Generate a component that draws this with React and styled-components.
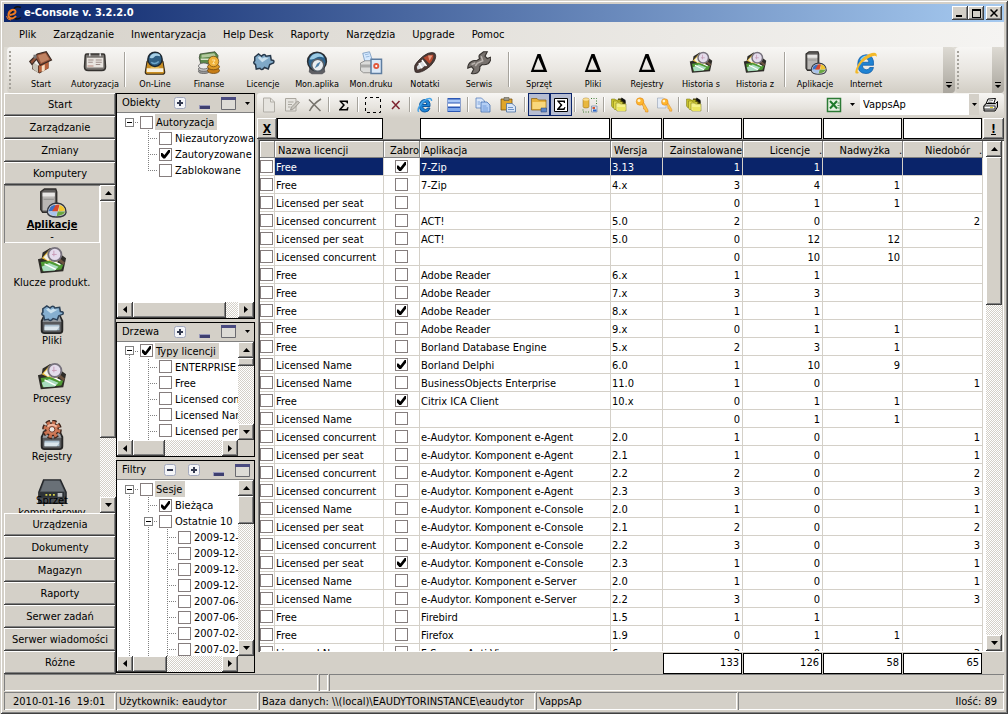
import React from 'react'
import styled, { createGlobalStyle, css } from 'styled-components'

const GlobalStyle = createGlobalStyle`
  * {
    box-sizing: border-box;
  }
  body {
    margin: 0;
    background: #d4d0c8;
  }
  body, button, input, select {
    font-family: 'DejaVu Sans Condensed', 'DejaVu Sans', sans-serif;
    font-size: 11px;
    color: #000;
  }
  button {
    margin: 0;
    padding: 0;
    border: 0;
    background: none;
  }
  ul {
    list-style: none;
    margin: 0;
    padding: 0;
  }
  svg {
    display: block;
    flex: none;
  }
`

const raised = css`
  background: #d4d0c8;
  box-shadow: inset -1px -1px #404040, inset 1px 1px #fff, inset -2px -2px #808080;
`

const flat = css`
  background: #d4d0c8;
  box-shadow: inset -1px -1px #808080, inset 1px 1px #fff;
`

/* ---------- data ---------- */

const menu = ['Plik', 'Zarządzanie', 'Inwentaryzacja', 'Help Desk', 'Raporty', 'Narzędzia', 'Upgrade', 'Pomoc']

const topTools = [
  ['Start', 'house'],
  ['Autoryzacja', 'card'],
  null,
  ['On-Line', 'user'],
  ['Finanse', 'money'],
  ['Licencje', 'puzzle'],
  ['Mon.aplika', 'compass'],
  ['Mon.druku', 'printDoc'],
  ['Notatki', 'knife'],
  ['Serwis', 'wrench'],
  null,
  ['Sprzęt', 'delta'],
  ['Pliki', 'delta'],
  ['Rejestry', 'delta'],
  ['Historia s', 'photos'],
  ['Historia z', 'photos'],
  null,
  ['Aplikacje', 'apps'],
  ['Internet', 'ieRing'],
]

const gridTools = [
  ['Nowy', 'page'],
  ['Edytuj', 'edit'],
  ['Usuń', 'cross'],
  null,
  ['Suma', 'sigma'],
  null,
  ['Zaznacz', 'marquee'],
  ['Odznacz', 'redCross'],
  null,
  ['Przeglądarka', 'ie'],
  null,
  ['Wiersze', 'rows'],
  null,
  ['Kopiuj', 'copy'],
  ['Wklej', 'paste', 'wide'],
  null,
  ['Grupy', 'folder', 'pressed'],
  ['Podsumowanie', 'sigmaBox', 'pressed'],
  null,
  ['Baza', 'dbSelect'],
  null,
  ['Foldery', 'folders'],
  ['Klucz', 'key'],
  ['Klucz dokumentu', 'keyPage'],
  null,
  ['Archiwum', 'folders'],
  null,
]

const topSections = ['Start', 'Zarządzanie', 'Zmiany', 'Komputery']
const bottomSections = ['Urządzenia', 'Dokumenty', 'Magazyn', 'Raporty', 'Serwer zadań', 'Serwer wiadomości', 'Różne']

const shortcuts = [
  ['Klucze produkt.', 'photos'],
  ['Pliki', 'drivePuzzle'],
  ['Procesy', 'photos'],
  ['Rejestry', 'driveGear'],
]

const objects = [
  { text: 'Autoryzacja', guides: ['root'], on: false },
  { text: 'Niezautoryzowane', guides: ['none', 'tee'], on: false },
  { text: 'Zautoryzowane', guides: ['none', 'tee'], on: true },
  { text: 'Zablokowane', guides: ['none', 'end'], on: false },
]

const trees = [
  { text: 'Typy licencji', guides: ['open'], on: true },
  ...['ENTERPRISE', 'Free', 'Licensed concurrent', 'Licensed Name', 'Licensed per seat', 'Licensed server'].map(text => ({
    text,
    guides: ['line', 'tee'],
    on: false,
  })),
]

const filters = [
  { text: 'Sesje', guides: ['open'], on: false },
  { text: 'Bieżąca', guides: ['line', 'tee'], on: true },
  { text: 'Ostatnie 10', guides: ['line', 'open'], on: false },
  ...['2009-12-14', '2009-12-11', '2009-12-10', '2009-12-09', '2007-06-19', '2007-06-12', '2007-02-20', '2007-02-13'].map(text => ({
    text,
    guides: ['line', 'line', 'tee'],
    on: false,
  })),
]

const rows = [
  ['Free', 1, '7-Zip', '3.13', 1, 1, '', ''],
  ['Free', 0, '7-Zip', '4.x', 3, 4, 1, ''],
  ['Licensed per seat', 0, '', '', 0, 1, 1, ''],
  ['Licensed concurrent', 0, 'ACT!', '5.0', 2, 0, '', 2],
  ['Licensed per seat', 0, 'ACT!', '5.0', 0, 12, 12, ''],
  ['Licensed concurrent', 0, '', '', 0, 10, 10, ''],
  ['Free', 0, 'Adobe Reader', '6.x', 1, 1, '', ''],
  ['Free', 0, 'Adobe Reader', '7.x', 3, 3, '', ''],
  ['Free', 1, 'Adobe Reader', '8.x', 1, 1, '', ''],
  ['Free', 0, 'Adobe Reader', '9.x', 0, 1, 1, ''],
  ['Free', 0, 'Borland Database Engine', '5.x', 2, 3, 1, ''],
  ['Licensed Name', 1, 'Borland Delphi', '6.0', 1, 10, 9, ''],
  ['Licensed Name', 0, 'BusinessObjects Enterprise', '11.0', 1, 0, '', 1],
  ['Free', 1, 'Citrix ICA Client', '10.x', 0, 1, 1, ''],
  ['Licensed Name', 0, '', '', 0, 1, 1, ''],
  ['Licensed concurrent', 0, 'e-Audytor. Komponent e-Agent', '2.0', 1, 0, '', 1],
  ['Licensed per seat', 0, 'e-Audytor. Komponent e-Agent', '2.1', 1, 0, '', 1],
  ['Licensed concurrent', 0, 'e-Audytor. Komponent e-Agent', '2.2', 2, 0, '', 2],
  ['Licensed concurrent', 0, 'e-Audytor. Komponent e-Agent', '2.3', 3, 0, '', 3],
  ['Licensed Name', 0, 'e-Audytor. Komponent e-Console', '2.0', 1, 0, '', 1],
  ['Licensed per seat', 0, 'e-Audytor. Komponent e-Console', '2.1', 2, 0, '', 2],
  ['Licensed concurrent', 0, 'e-Audytor. Komponent e-Console', '2.2', 3, 0, '', 3],
  ['Licensed per seat', 1, 'e-Audytor. Komponent e-Console', '2.3', 1, 0, '', 1],
  ['Licensed Name', 0, 'e-Audytor. Komponent e-Server', '2.0', 1, 0, '', 1],
  ['Licensed Name', 0, 'e-Audytor. Komponent e-Server', '2.2', 3, 0, '', 3],
  ['Free', 0, 'Firebird', '1.5', 1, 1, '', ''],
  ['Free', 0, 'Firefox', '1.9', 0, 1, 1, ''],
  ['Licensed Name', 0, 'F-Secure Anti-Virus', '6.x', 3, 0, '', 3],
]

/* ---------- icons ---------- */

const photosArt = (
  <>
    <path d="m1 14 4-1 1-6 5-3 3-2 13 8 4 3-3 14-24 2z" fill="#2e2c28" />
    <path d="m5 13 8-9 13 6-6 10z" fill="#e3b93b" />
    <path d="m7 12 6-6 4 2-5 8z" fill="#f3f2ea" />
    <path d="m4 17 9-1 15 4-2 5-20 2z" fill="#4f9a35" />
    <path d="m5 22 8-4 10 4-4 4-12 1z" fill="#a9dcc0" />
    <path d="m8 19 12 6M13 14l12 6" stroke="#fff" strokeWidth="1.500" />
    <path d="m23 14 6 5" stroke="#6d5440" strokeWidth="3" />
    <circle cx="19" cy="9" r="7" fill="#e4dcec" stroke="#77727d" strokeWidth="2" />
    <path d="M18 5v6M16 9h5" stroke="#c79bb4" />
  </>
)

const driveArt = (
  <>
    <path d="M5 18 8 12h16l3 6v10q0 3-3 3H8q-3 0-3-3z" fill="#58595b" stroke="#262626" strokeWidth="2" />
    <path d="m8 13-2 6h20l-2-6z" fill="#9aa0a5" />
    <path d="M8 22h16v6H8z" fill="#a9bfce" />
    <path d="M8 24h16l-3 4H8z" fill="#dbe6ec" />
  </>
)

const puzzlePath = 'M5 8 10 4l4 3q4-5 6 0l6-1 1 6q5 0 3 4l-5 2-2 6-5-2q-4 5-6 1l-5 1-1-6q-4-2-1-5z'
const ePath = 'M26 19H11q1 6 6 6 3 0 4-3h5q-2 8-10 8Q5 30 5 18T16 5q11 0 10 14zM11 15h9q-1-5-4-5-4 0-5 5z'

const folderStack = (
  <>
    <path d="M14 3h8l7 6v14H14z" fill="#4d490c" />
    <path d="M1 4h7l2 2h9v15H3L1 18z" fill="#c6c02c" stroke="#77720f" />
    <path d="M5 8h7l2 2h9v15H7l-2-3z" fill="#dfd94a" stroke="#77720f" />
    <path d="M10 12h7l2 2h11v14H12l-2-3z" fill="#f6f28a" stroke="#77720f" />
    <path d="M12 20h17l-1 8H14z" fill="#ece65e" />
    <path d="m21 1 8 5v7l-9-7z" fill="#111" />
  </>
)

const keyArt = (
  <>
    <path d="m14 12 4-3 10 17v4h-5l-1-5-3-1v-4z" fill="#ffc448" stroke="#d77a12" />
    <circle cx="12" cy="9" r="7.500" fill="#ffb62e" stroke="#d77a12" />
    <circle cx="10" cy="7" r="3" fill="#fff3cf" />
  </>
)

const art = {
  house: (
    <>
      <path d="m4 17 7 3 15-6v9L14 30 4 24z" fill="#4a3024" />
      <path d="m4 14 8 5v10l-7-5z" fill="#c9c5b8" />
      <path d="m13 19 13-6v10l-13 6z" fill="#b8623b" />
      <path d="M17 20l4-2v8l-4 2z" fill="#f4dfc4" />
      <path d="M1 14 11 4l12-3 7 11-15 7-5-8-6 7z" fill="#94543a" stroke="#3a2922" strokeWidth="1.500" />
      <path d="m12 6 10-3 5 8-11 5z" fill="#c08363" />
      <path d="M6 5h4v5H6z" fill="#777" />
    </>
  ),
  card: (
    <>
      <path d="M3 6q0-2 2-2h22q2 0 2 2l1 15q0 5-5 5H7q-5 0-5-5z" fill="#77736f" stroke="#34322f" strokeWidth="2" />
      <path d="M5 9h22v13H5z" fill="#e8e4df" />
      <path d="M7 12h7M7 15h6M17 12h8M17 15h8M17 18h6" stroke="#a08f8a" strokeWidth="1.500" />
      <path d="M9 3v4M23 3v4" stroke="#ddd" strokeWidth="2" />
      <path d="M6 19h8v2H6z" fill="#c9a79c" />
    </>
  ),
  user: (
    <>
      <path d="M3 28 5 16q0-4 4-4h14q4 0 4 4l2 12q0 3-3 3H6q-3 0-3-3z" fill="#c98e22" stroke="#33291a" strokeWidth="1.500" />
      <path d="M5 23h22v5H5z" fill="#f7efdc" />
      <path d="m9 23 14 0-4-3h-7z" fill="#e8bd55" />
      <circle cx="16" cy="11" r="9.500" fill="#2f5f84" stroke="#1c2730" strokeWidth="2" />
      <path d="M9 9q1-6 8-6 6 0 6 4-6-2-8 1t-6 1z" fill="#a7d0e6" />
      <path d="M11 15q5 4 10-1" stroke="#6ea6c9" strokeWidth="2" fill="none" />
    </>
  ),
  money: (
    <>
      <path d="M4 4 24 1l4 5-1 11H5L3 9z" fill="#5c8a4b" stroke="#33412c" />
      <path d="m6 5 17-2 2 4L6 9z" fill="#b2c99d" />
      <path d="M5 11h20" stroke="#d8e2cb" strokeWidth="2" />
      <ellipse cx="9" cy="27" rx="7" ry="3" fill="#999" stroke="#555" />
      <ellipse cx="9" cy="24" rx="7" ry="3" fill="#c7c7c7" stroke="#555" />
      <ellipse cx="9" cy="20" rx="7" ry="4" fill="#ececec" stroke="#555" />
      <ellipse cx="22" cy="26" rx="8" ry="4" fill="#c77d16" stroke="#6a430e" />
      <ellipse cx="22" cy="21" rx="8" ry="4" fill="#dd9a26" stroke="#6a430e" />
      <circle cx="22" cy="14" r="7" fill="#f0b23a" stroke="#7a4f10" />
      <path d="M20 12h4l-3 5h3" stroke="#fff0c0" fill="none" />
    </>
  ),
  puzzle: (
    <>
      <path d={puzzlePath} fill="#7fa9c8" stroke="#27384a" strokeWidth="2" />
      <path d="m9 9 3-2 3 3q4-3 5-1l4 0-9 6z" fill="#c9e0ee" />
    </>
  ),
  compass: (
    <>
      <path d="M6 20h20l1 8-4 3H9l-4-3z" fill="#5f5f63" />
      <circle cx="16" cy="14" r="12.500" fill="#2d638c" stroke="#2a2e33" strokeWidth="2" />
      <path d="M6 11Q9 3 17 3q7 1 8 6-6-3-10 0t-9 2z" fill="#9ccbe4" />
      <circle cx="17" cy="19" r="8" fill="#e9edf0" stroke="#59616a" strokeWidth="2" />
      <path d="m13 23 3-6 5-3-3 6z" fill="#4b7ea7" />
    </>
  ),
  printDoc: (
    <>
      <path d="M5 3 14 1l4 12-10 2z" fill="#d5e9ff" stroke="#6a8fb8" />
      <path d="m8 5 5-1M9 8l5-1" stroke="#86a9d0" />
      <path d="M2 16 8 13h14l5 4v9l-7 3H6l-4-3z" fill="#dcdcda" stroke="#7b7b79" />
      <path d="M2 18h15v4H2z" fill="#a9a9a7" />
      <path d="M16 11h14v19H16z" fill="#dbe9f8" stroke="#5e7da0" strokeWidth="2" />
      <circle cx="23" cy="20" r="4" fill="#e2573b" />
      <circle cx="23" cy="20" r="1.500" fill="#fff" />
    </>
  ),
  knife: (
    <>
      <path d="M2 24q-1-5 4-10Q13 6 20 3q6-2 9 0 3 4-1 11-4 7-13 12-8 4-12 2z" fill="#4b3a36" stroke="#2b2220" />
      <path d="M14 9q7-5 13-4 1 6-5 12z" fill="#b6492f" />
      <path d="m20 6 6 0-4 7z" fill="#e59a80" />
      <path d="M5 21q4-6 8-8l4 6q-5 5-11 6z" fill="#d9dde0" />
      <path d="m12 12 6 8M8 16l4 7" stroke="#fff" strokeWidth="2" />
    </>
  ),
  wrench: (
    <>
      <path
        d="m17 5 5-4 5 0-3 6 3 3 5-2q0 6-4 9-4 2-8 1l-3 3q1 5-3 8-4 2-8 1l3-6-3-3-5 2q0-6 5-9 3-2 7-1l4-3q-2-3 0-5z"
        fill="#77716d"
        stroke="#36322f"
        strokeWidth="1.500"
      />
      <path d="m19 7 2 6-7 3-3 4M6 18l5-2" stroke="#b9b3ae" strokeWidth="2" fill="none" />
    </>
  ),
  delta: <path d="M5 28 14 4h4l9 24zm4-3h13L15 9z" fill="#000" fillRule="evenodd" />,
  photos: photosArt,
  apps: (
    <>
      <path d="m4 4 4-3h12l1 3v22H6l-2-3z" fill="#5f5d5b" stroke="#2f2d2b" strokeWidth="1.500" />
      <path d="M6 5h13v19H6z" fill="#b9b7b4" />
      <path d="M6 5h13v4H6z" fill="#e7e6e4" />
      <path d="M7 12h11" stroke="#8c8a88" />
      <path d="M11 26q0-9 10-10 10 1 10 10-1 5-10 5t-10-5z" fill="#d7d6d3" stroke="#313640" strokeWidth="1.500" />
      <path d="M13 23q1-5 7-5v6l-8 1z" fill="#3c6fc4" />
      <path d="M20 18q3-1 4 0l-2 7h-6z" fill="#d9482b" />
      <path d="M24 18q5 1 6 6l-7 1z" fill="#f2c62e" />
      <path d="M22 25h8q-1 4-9 5z" fill="#6aa843" />
      <path d="M12 25h10l-2 5q-7-1-8-5z" fill="#a9c4ec" />
    </>
  ),
  ieRing: (
    <>
      <path d={ePath} fill="#1f83d3" fillRule="evenodd" stroke="#0c5aa6" />
      <path d="M9 12q3-5 8-5" stroke="#7fd0ff" strokeWidth="2" fill="none" />
      <path d="M7 29Q-1 33 3 23 8 10 20 4q12-5 10 4-1-4-10 1Q8 15 5 25q-1 4 2 4z" fill="#f3b92a" />
    </>
  ),
  ie: (
    <>
      <path d={ePath} fill="#1f86d6" fillRule="evenodd" stroke="#0b559e" strokeWidth="2" />
      <path d="M4 28Q1 30 3 22 9 10 20 4q10-3 9 4" fill="none" stroke="#49a4e6" strokeWidth="3" />
    </>
  ),
  drivePuzzle: (
    <>
      {driveArt}
      <g transform="translate(2 -1) scale(.85 .75)">
        <path d={puzzlePath} fill="#86afd0" stroke="#2d4258" strokeWidth="2" />
        <path d="m9 9 3-2 3 3q4-3 5-1l4 0-9 6z" fill="#c9e0ee" />
      </g>
    </>
  ),
  driveGear: (
    <>
      {driveArt}
      <circle cx="16" cy="10" r="8" fill="none" stroke="#3b231b" strokeWidth="5" strokeDasharray="4.200 2.080" />
      <circle cx="16" cy="10" r="7.500" fill="#3b231b" />
      <circle cx="16" cy="10" r="7" fill="none" stroke="#c9714f" strokeWidth="4" strokeDasharray="3.200 2.300" />
      <circle cx="16" cy="10" r="6" fill="#cf7a58" />
      <path d="M11 7q5-4 10 0" stroke="#f2b79f" strokeWidth="2" fill="none" />
      <circle cx="16" cy="10" r="3" fill="#e9e7e3" stroke="#6f3524" />
    </>
  ),
  server: (
    <>
      <path d="M7 2h18l6 13v12H2V15z" fill="#4a4f54" stroke="#23262a" strokeWidth="1.500" />
      <path d="M8 3h16l5 11H4z" fill="#697077" />
      <path d="M3 15h26v6H3z" fill="#2d3236" />
      <path d="M9 17h2v2H9zM13 17h2v2h-2zM17 17h2v2h-2z" fill="#d8d24a" />
      <path d="M22 16h5v4h-5z" fill="#b8bcc0" />
    </>
  ),
  page: <path d="M5 2h14l8 8v20H5zM19 2v8h8" fill="#e6e4df" stroke="#b1aea7" strokeWidth="2" />,
  edit: (
    <>
      <path d="M3 3h21v25H3z" fill="#e6e4df" stroke="#aaa79f" strokeWidth="2" />
      <path d="M8 10h11M8 15h8M8 20h5" stroke="#aaa79f" strokeWidth="2" />
      <path d="m27 8 4 3-12 13-6 2 2-6z" fill="#c9c6bf" stroke="#8d8a83" strokeWidth="1.500" />
    </>
  ),
  cross: <path d="m4 5 23 23M28 4Q13 13 5 28" fill="none" stroke="#77746d" strokeWidth="3" />,
  sigma: <path d="M7 7h17v6h-2q0-3-4-3h-6l6 6-7 8h8q4 0 4-4h2l-1 7H6v-2l8-9-7-7z" fill="#000" />,
  marquee: <path d="M1 1h30v30H1z" fill="none" stroke="#000" strokeWidth="2" strokeDasharray="6 6" strokeDashoffset="3" />,
  redCross: <path d="m8 8 15 16M23 8 8 24" stroke="#7d2430" strokeWidth="3" />,
  rows: (
    <>
      <path d="M3 2h26v28H3z" fill="#2b57b4" />
      <path d="M4 5h24v6H4z" fill="#a9c7f5" />
      <path d="M4 13h24v6H4z" fill="#fff" />
      <path d="M4 22h24v6H4z" fill="#7ea8ec" />
    </>
  ),
  copy: (
    <>
      <path d="M2 2h11l6 6v14H2z" fill="#dbe8fa" stroke="#5079b8" strokeWidth="1.500" />
      <path d="M12 10h12l6 6v14H12z" fill="#b4cff5" stroke="#3c68ad" strokeWidth="1.500" />
      <path d="M5 10h5M5 14h5M15 18h8M15 22h11M15 26h11" stroke="#5f8bd0" strokeWidth="1.500" />
    </>
  ),
  paste: (
    <>
      <path d="M2 4h22v22H2z" fill="#e0a62b" stroke="#6d4c12" strokeWidth="1.500" />
      <path d="M8 1h10v6H8z" fill="#9b9688" stroke="#4f4a3c" />
      <path d="M13 13h11l7 6v11H13z" fill="#d9e6f8" stroke="#41699f" strokeWidth="1.500" />
      <path d="M16 21h10M16 25h12" stroke="#6d93c9" strokeWidth="2" />
    </>
  ),
  folder: (
    <>
      <path d="M1 3h11l3 3h15v20H1z" fill="#e8b23c" stroke="#8e6516" strokeWidth="1.500" />
      <path d="M3 10h26v14H3z" fill="#f9d77b" />
      <path d="M20 22h11v8H20z" fill="#5c84c4" stroke="#233f70" />
    </>
  ),
  sigmaBox: (
    <>
      <path d="M3 3h26v26H3z" fill="#fff" stroke="#000" strokeWidth="2" />
      <path d="M8 7h16v5h-2q0-3-4-2h-5l6 6-6 7h6q3 0 4-3h2l-2 6H8v-2l7-8-7-8z" fill="#000" />
    </>
  ),
  dbSelect: (
    <>
      <path d="M2 5q0-3 6-3t6 3v14q0 3-6 3t-6-3z" fill="#e8b73f" stroke="#90691c" />
      <ellipse cx="8" cy="5" rx="6" ry="2.500" fill="#f9df94" />
      <path d="M18 3h11v12M2 25v5h13" fill="none" stroke="#3f7d33" strokeWidth="2" strokeDasharray="2 3" />
      <path d="M19 18h11v12H19z" fill="#dfe6f0" stroke="#45628e" />
      <path d="M21 20h5v4h-5z" fill="#d4542e" />
      <path d="M22 25h7v4h-7z" fill="#2f67c4" />
    </>
  ),
  folders: folderStack,
  key: keyArt,
  keyPage: (
    <>
      <path d="M1 2h12l5 5v15H1z" fill="#e4ebf5" stroke="#8291a8" />
      <g transform="translate(5 2) scale(.88)">{keyArt}</g>
    </>
  ),
  excel: (
    <>
      <path d="M3 3h26v26H3z" fill="#e3f1e0" stroke="#2c7a35" strokeWidth="3" />
      <path d="m8 8 14 15M22 8 8 23" stroke="#1f7a2c" strokeWidth="4" />
      <path d="M23 12h4M23 17h4M23 22h4" stroke="#2c7a35" strokeWidth="1.500" />
    </>
  ),
  printer: (
    <>
      <path d="m10 4 15-1-4 11H6z" fill="#fff" stroke="#000" strokeWidth="2" />
      <path d="m11 8 9-1M10 11l9 0" stroke="#000" />
      <path d="M2 17 7 13h18l4-4v11l-5 8H2z" fill="#c9c9c9" stroke="#000" strokeWidth="2" />
      <path d="M2 18h22v6H2z" fill="#fff" stroke="#000" strokeWidth="1.500" />
      <path d="M14 21h6" stroke="#e3d31b" strokeWidth="2" />
    </>
  ),
  logo: (
    <>
      <path d="M30 5Q18 0 13 12t5 15q5 3 12-2" fill="none" stroke="#111" strokeWidth="3" />
      <path d="M8 20q12-2 11-7t-7-3Q5 13 5 20t7 7q5-1 8-5" fill="none" stroke="#ef7b22" strokeWidth="4" />
      <path d="M1 22q1 8 9 8" stroke="#ef7b22" strokeWidth="2" fill="none" />
    </>
  ),
}

const Icon = ({ name, size = 16 }) => (
  <svg width={size} height={size} viewBox="0 0 32 32" fill="none" aria-hidden="true">
    {art[name]}
  </svg>
)

const arrows = {
  up: 'M0 4h7L3.500 0z',
  down: 'M0 0h7L3.500 4z',
  left: 'M4 0v7L0 3.500z',
  right: 'M0 0v7l4-3.500z',
}

const Arrow = ({ dir }) => {
  const upright = dir === 'up' || dir === 'down'
  return (
    <svg width={upright ? 7 : 4} height={upright ? 4 : 7} aria-hidden="true">
      <path d={arrows[dir]} fill="#000" />
    </svg>
  )
}

/* ---------- window frame ---------- */

const Window = styled.div`
  display: flex;
  flex-direction: column;
  height: 100vh;
  padding: 4px;
  background: #d4d0c8;
  box-shadow: inset 1px 1px #d4d0c8, inset -1px -1px #404040, inset 2px 2px #fff, inset -2px -2px #808080;
`

const TitleBar = styled.header`
  display: flex;
  align-items: center;
  height: 18px;
  flex: none;
  padding: 0 2px;
  background: linear-gradient(90deg, #0a246a, #a6caf0);
`

const Title = styled.h1`
  flex: 1;
  margin: 0 0 0 2px;
  font-size: 11px;
  line-height: 18px;
  color: #fff;
`

const CaptionButton = styled.button`
  ${raised}
  display: flex;
  justify-content: center;
  align-items: center;
  width: 16px;
  height: 14px;
  margin-left: ${p => (p.$apart ? '2px' : '0')};
`

const MenuBar = styled.nav`
  display: flex;
  align-items: center;
  gap: 17px;
  height: 25px;
  flex: none;
  padding: 0 15px;
  background: linear-gradient(90deg, #d6d2ca, #f5f4f2);
`

const MenuItem = styled.button`
  line-height: 16px;
  white-space: nowrap;
`

/* ---------- top toolbar ---------- */

const ToolStrips = styled.div`
  display: flex;
  height: 46px;
  flex: none;
  padding-left: 3px;
  background: #dedbd4;
`

const Strip = styled.div`
  display: flex;
  flex: ${p => (p.$grow ? '1' : '0 0 49px')};
  min-width: 0;
  border-radius: 4px;
  background: linear-gradient(#f7f6f4, #e9e6e1 50%, #d2cec5);
`

const Grip = styled.span`
  width: 5px;
  margin: 4px 0 4px 2px;
  background: repeating-linear-gradient(#a5a29b 0 2px, transparent 2px 4px) 0 0 / 2px 100% no-repeat;
`

const TopButton = styled.button`
  display: flex;
  flex-direction: column;
  align-items: center;
  width: ${p => (p.$narrow ? '48px' : '54px')};
  flex: none;
  padding-top: 4px;
  font-size: 9px;
  line-height: 18px;
  white-space: nowrap;
`

const Divider = styled.span`
  width: 6px;
  flex: none;
  margin: ${p => (p.$tall ? '5px 0 6px' : '4px 0')};
  background: linear-gradient(90deg, #a6a39c 1px, #fff 1px) 2px 0 / 2px 100% no-repeat;
`

const Spacer = styled.span`
  flex: 1;
`

const Overflow = styled.button`
  display: flex;
  align-items: flex-end;
  justify-content: center;
  width: 12px;
  padding-bottom: 4px;
  border-radius: 0 4px 4px 0;
  background: linear-gradient(#dddad3, #aaa69e);
`

/* ---------- sidebar ---------- */

const Main = styled.main`
  display: grid;
  grid-template-columns: 112px 139px minmax(0, 1fr);
  flex: 1;
  min-height: 0;
`

const Sidebar = styled.nav`
  display: flex;
  flex-direction: column;
  min-height: 0;
`

const SectionButton = styled.button`
  ${raised}
  height: 23px;
  flex: none;
  white-space: nowrap;
`

const ShortcutArea = styled.div`
  display: flex;
  flex: 1;
  min-height: 0;
`

const ShortcutList = styled.div`
  flex: 1;
  overflow: hidden;
`

const Shortcut = styled.button`
  display: flex;
  flex-direction: column;
  align-items: center;
  width: 96px;
  height: 58px;
  padding-top: 3px;
  line-height: 14px;
`

const ActiveShortcut = styled(Shortcut)`
  line-height: 11px;
  box-shadow: inset 1px 1px #808080, inset -1px -1px #fff;

  strong {
    line-height: 13px;
    text-decoration: underline;
  }
`

const ClippedShortcut = styled(Shortcut)`
  line-height: 12px;

  span {
    margin-top: -13px;
  }
`

/* ---------- scroll bars ---------- */

const Bar = styled.div`
  display: flex;
  flex-direction: ${p => (p.$across ? 'row' : 'column')};
  flex: none;
  ${p => (p.$across ? 'height: 16px;' : 'width: 16px;')}
  background: repeating-conic-gradient(#fff 0 25%, #d4d0c8 0 50%) 0 0 / 2px 2px;
`

const BarButton = styled.button`
  ${raised}
  display: flex;
  align-items: center;
  justify-content: center;
  width: 16px;
  height: 16px;
  flex: none;
`

const Thumb = styled.span`
  ${raised}
  flex: ${p => p.$share} 1 0;
`

const Rest = styled.span`
  flex: ${p => p.$share} 1 0;
`

const ScrollBar = ({ across, share }) => (
  <Bar $across={across}>
    <BarButton aria-label={across ? 'W lewo' : 'W górę'}>
      <Arrow dir={across ? 'left' : 'up'} />
    </BarButton>
    <Thumb $share={share} />
    <Rest $share={100 - share} />
    <BarButton aria-label={across ? 'W prawo' : 'W dół'}>
      <Arrow dir={across ? 'right' : 'down'} />
    </BarButton>
  </Bar>
)

/* ---------- tree panels ---------- */

const Panels = styled.div`
  display: grid;
  grid-template-rows: 226fr 136fr 213fr;
  gap: 3px;
  min-height: 0;
  padding-bottom: 1px;
`

const PanelBox = styled.section`
  display: flex;
  flex-direction: column;
  min-width: 0;
  min-height: 0;
  border: 1px solid #000;
  overflow: hidden;
`

const PanelHead = styled.div`
  display: flex;
  height: 19px;
  flex: none;
  border-bottom: 1px solid #808080;
`

const PanelTitle = styled.h2`
  flex: 1;
  margin: 0;
  padding-left: 5px;
  font-size: 11px;
  font-weight: normal;
  line-height: 17px;
`

const PanelButton = styled.button`
  display: flex;
  align-items: center;
  justify-content: center;
  width: ${p => (p.$small ? '14px' : '24px')};
`

const PanelBody = styled.div`
  display: flex;
  flex: 1;
  min-height: 0;
  background: #fff;
`

const PanelFoot = styled.div`
  display: flex;
  flex: none;

  & > div {
    flex: 1;
  }
`

const Corner = styled.span`
  width: 16px;
  background: #d4d0c8;
`

const TreeList = styled.ul`
  flex: 1;
  min-width: 0;
  padding: 1px 0 0 3px;
  overflow: hidden;
`

const TreeRow = styled.li`
  display: flex;
  align-items: center;
  height: 16px;
  white-space: nowrap;
`

const vertical = 'repeating-linear-gradient(#808080 0 1px, transparent 1px 2px)'
const horizontal = 'repeating-linear-gradient(90deg, #808080 0 1px, transparent 1px 2px) 9px 8px / 10px 1px no-repeat'

const guideBackgrounds = {
  none: 'none',
  root: horizontal,
  line: `${vertical} 9px 0 / 1px 16px no-repeat`,
  tee: `${vertical} 9px 0 / 1px 16px no-repeat, ${horizontal}`,
  end: `${vertical} 9px 0 / 1px 8px no-repeat, ${horizontal}`,
  open: `${vertical} 9px 8px / 1px 8px no-repeat, ${horizontal}`,
}

const Guide = styled.span`
  display: flex;
  align-items: center;
  justify-content: center;
  width: 19px;
  height: 16px;
  flex: none;
  background: ${p => guideBackgrounds[p.$kind]};
`

const Expander = styled.button`
  width: 9px;
  height: 9px;
  border: 1px solid #808080;
  background: linear-gradient(#000, #000) center / 5px 1px no-repeat #fff;
`

const Check = styled.input.attrs({ type: 'checkbox' })`
  appearance: none;
  display: block;
  width: 13px;
  height: 13px;
  flex: none;
  margin: 0;
  border: 1px solid #857d7d;
  background: #fff;

  &:checked::after {
    content: '';
    display: block;
    width: 9px;
    height: 9px;
    margin: 1px;
    background: #000;
    clip-path: polygon(0 40%, 15% 40%, 38% 62%, 85% 0, 100% 0, 100% 30%, 45% 100%, 25% 100%, 0 72%);
  }
`

const TreeLabel = styled.label`
  display: flex;
  align-items: center;
  gap: 2px;
  padding-left: 1px;

  span {
    padding: 1px ${p => (p.$root ? '3px' : '1px')} 0 1px;
    line-height: 15px;
    background: ${p => (p.$root ? '#d4d0c8' : 'none')};
  }
`

const headIcons = {
  minus: (
    <svg width="12" height="12">
      <rect x="0.500" y="0.500" width="11" height="11" rx="2" fill="#f4f5f8" stroke="#a3a9bd" />
      <path d="M3 6h6" stroke="#333a50" strokeWidth="2" />
    </svg>
  ),
  plus: (
    <svg width="12" height="12">
      <rect x="0.500" y="0.500" width="11" height="11" rx="2" fill="#f4f5f8" stroke="#a3a9bd" />
      <path d="M3 6h6M6 3v6" stroke="#333a50" strokeWidth="2" />
    </svg>
  ),
  min: (
    <svg width="11" height="12">
      <path d="M0 8h11v4H0z" fill="#9a9abb" />
      <path d="M1 9h10v3H1z" fill="#3e3f70" />
    </svg>
  ),
  max: (
    <svg width="15" height="13">
      <path d="M0.500 0.500h14v12h-14z" fill="#dddbd6" stroke="#6a6a70" />
      <path d="M0 0h15v3H0z" fill="#4a4b80" />
    </svg>
  ),
  drop: (
    <svg width="5" height="3">
      <path d="M0 0h5L2.500 3z" fill="#000" />
    </svg>
  ),
}

const Panel = ({ title, buttons, nodes, vShare, hShare }) => (
  <PanelBox>
    <PanelHead>
      <PanelTitle>{title}</PanelTitle>
      {buttons.map(b => (
        <PanelButton key={b} $small={b === 'drop'} aria-label={`${title} ${b}`}>
          {headIcons[b]}
        </PanelButton>
      ))}
    </PanelHead>
    <PanelBody>
      <TreeList>
        {nodes.map((node, i) => (
          <TreeRow key={i}>
            {node.guides.map((kind, g) => (
              <Guide key={g} $kind={kind}>
                {(kind === 'open' || kind === 'root') && <Expander aria-label={`Zwiń ${node.text}`} />}
              </Guide>
            ))}
            <TreeLabel $root={i === 0}>
              <Check defaultChecked={node.on} />
              <span>{node.text}</span>
            </TreeLabel>
          </TreeRow>
        ))}
      </TreeList>
      {vShare && <ScrollBar share={vShare} />}
    </PanelBody>
    <PanelFoot>
      <ScrollBar across share={hShare} />
      {vShare && <Corner />}
    </PanelFoot>
  </PanelBox>
)

/* ---------- grid ---------- */

const Content = styled.section`
  display: flex;
  flex-direction: column;
  min-width: 0;
  min-height: 0;
  padding-left: 2px;
`

const GridToolbar = styled.div`
  display: flex;
  height: 25px;
  flex: none;
  padding: 0 2px 2px 0;
  border-radius: 3px;
  background: linear-gradient(#f7f6f4, #e6e3dd 60%, #d4d0c8);
`

const ToolButton = styled.button`
  display: flex;
  align-items: center;
  justify-content: center;
  width: ${p => (p.$look === 'wide' ? '28px' : p.$look === 'pressed' ? '22px' : '23px')};
  flex: none;
  ${p => p.$look === 'pressed' && 'border: 1px solid #0a246a; background: #b6bdd2;'}
`

const Combo = styled.div`
  position: relative;
  width: 119px;
  margin: 1px 0 1px 1px;
`

const ComboSelect = styled.select`
  appearance: none;
  width: 100%;
  height: 100%;
  padding: 0 14px 0 3px;
  border: 0;
  border-radius: 0;
  background: #fff;
`

const ComboArrow = styled.span`
  position: absolute;
  top: 0;
  right: 0;
  bottom: 0;
  display: flex;
  align-items: center;
  justify-content: center;
  width: 10px;
  background: #d4d0c8;
  pointer-events: none;
`

const columns = '20px 107px 36px minmax(0, 1fr) 52px repeat(4, 80px) 21px'

const FilterRow = styled.div`
  display: grid;
  grid-template-columns: ${columns};
  height: 21px;
  flex: none;
`

const FilterInput = styled.input`
  width: calc(100% - 1px);
  min-width: 0;
  height: 21px;
  padding: 0 3px;
  border: 1px solid #000;
  border-radius: 0;
  background: #fff;
`

const EdgeButton = styled.button`
  ${raised}
  height: 21px;
  font-size: 12px;
  font-weight: bold;
  text-decoration: underline;
`

const GridFrame = styled.div`
  display: flex;
  flex: 1;
  min-height: 0;
  margin-left: 1px;
  padding: 2px 2px 1px;
  background: #fff;
  box-shadow: inset 1px 1px #808080, inset 2px 2px #404040, inset -1px -1px #fff, inset -2px -1px #d4d0c8;
`

const TableClip = styled.div`
  flex: 1;
  min-width: 0;
  margin-right: 3px;
  overflow: hidden;
`

const Table = styled.table`
  width: 100%;
  table-layout: fixed;
  border-collapse: separate;
  border-spacing: 0;
`

const HeadCell = styled.th`
  height: 17px;
  padding: 1px ${p => p.$end || 0}px 0 3px;
  overflow: hidden;
  font-weight: normal;
  line-height: 15px;
  text-align: ${p => (p.$end ? 'right' : 'left')};
  white-space: nowrap;
  ${flat}
`

const SortMark = styled.span`
  float: right;
  width: 3px;
  margin-right: -12px;
`

const Cell = styled.td`
  height: 18px;
  padding: 2px 2px 0 1px;
  overflow: hidden;
  border-right: 1px solid #d4d0c8;
  border-bottom: 1px solid #d4d0c8;
  line-height: 15px;
  text-align: ${p => (p.$num ? 'right' : 'left')};
  white-space: nowrap;
  ${p => p.$active && 'background: #0a246a; color: #fff;'}
`

const CheckCell = styled(Cell)`
  padding: 0 0 0 ${p => (p.$middle ? '11px' : '0')};
`

const Totals = styled.div`
  display: grid;
  grid-template-columns: ${columns};
  height: 22px;
  flex: none;
  padding-top: 1px;
`

const Total = styled.output`
  grid-column: ${p => p.$col};
  margin-right: 1px;
  padding-right: 2px;
  border: 1px solid #000;
  background: #fff;
  line-height: 17px;
  text-align: right;
`

/* ---------- status bars ---------- */

const StatusBar = styled.footer`
  display: grid;
  grid-template-columns: ${p => p.$cols};
  gap: 1px;
  height: ${p => (p.$text ? '18px' : '17px')};
  flex: none;
  margin-top: ${p => (p.$text ? '1px' : '0')};
`

const StatusCell = styled.span`
  padding: 0 ${p => (p.$end ? '7px' : '0')} 0 ${p => (p.$date ? '9px' : '3px')};
  overflow: hidden;
  box-shadow: inset 1px 1px #808080, inset -1px -1px #fff;
  line-height: 19px;
  text-align: ${p => (p.$end ? 'right' : 'left')};
  white-space: pre;
`

const OverflowMark = () => (
  <svg width="7" height="7" aria-hidden="true">
    <path d="M0 0h6v1H0zM0 3h6L3 6z" fill="#000" />
  </svg>
)

const DataRow = ({ row, active }) => {
  const [license, blocked, app, version, ...numbers] = row
  return (
    <tr>
      <CheckCell>
        <Check aria-label={`Zaznacz ${app || license}`} />
      </CheckCell>
      <Cell $active={active}>{license}</Cell>
      <CheckCell $middle>
        <Check defaultChecked={!!blocked} aria-label={`Zabronione ${app || license}`} />
      </CheckCell>
      <Cell $active={active}>{app}</Cell>
      <Cell $active={active}>{version}</Cell>
      {numbers.map((n, i) => (
        <Cell key={i} $num $active={active}>
          {n}
        </Cell>
      ))}
    </tr>
  )
}

const App = () => (
  <>
    <GlobalStyle />
    <Window>
      <TitleBar>
        <Icon name="logo" size={16} />
        <Title>e-Console v. 3.2.2.0</Title>
        <CaptionButton aria-label="Minimalizuj">
          <svg width="8" height="8">
            <path d="M0 6h6v2H0z" fill="#000" />
          </svg>
        </CaptionButton>
        <CaptionButton aria-label="Maksymalizuj">
          <svg width="9" height="9">
            <path d="M0 0h9v9H0zM1 2v6h7V2z" fill="#000" fillRule="evenodd" />
          </svg>
        </CaptionButton>
        <CaptionButton $apart aria-label="Zamknij">
          <svg width="8" height="8">
            <path d="m0.500 0.500 7 7M7.500 0.500l-7 7" stroke="#000" strokeWidth="1.500" />
          </svg>
        </CaptionButton>
      </TitleBar>

      <MenuBar>
        {menu.map(m => (
          <MenuItem key={m}>{m}</MenuItem>
        ))}
      </MenuBar>

      <ToolStrips>
        <Strip $grow>
          <Grip />
          {topTools.map((t, i) =>
            t ? (
              <TopButton key={i} $narrow={t[0] === 'Internet'}>
                <Icon name={t[1]} size={24} />
                {t[0]}
              </TopButton>
            ) : (
              <Divider key={i} $tall />
            )
          )}
          <Spacer />
          <Overflow aria-label="Więcej">
            <OverflowMark />
          </Overflow>
        </Strip>
        <Strip>
          <Grip />
          <Spacer />
          <Overflow aria-label="Więcej">
            <OverflowMark />
          </Overflow>
        </Strip>
      </ToolStrips>

      <Main>
        <Sidebar>
          {topSections.map(s => (
            <SectionButton key={s}>{s}</SectionButton>
          ))}
          <ShortcutArea>
            <ShortcutList>
              <ActiveShortcut>
                <Icon name="apps" size={30} />
                <strong>Aplikacje</strong>
                <span>-</span>
              </ActiveShortcut>
              {shortcuts.map(([text, icon]) => (
                <Shortcut key={text}>
                  <Icon name={icon} size={30} />
                  <span>{text}</span>
                </Shortcut>
              ))}
              <ClippedShortcut>
                <Icon name="server" size={30} />
                <span>Sprzęt komputerowy</span>
              </ClippedShortcut>
            </ShortcutList>
            <ScrollBar share={80} />
          </ShortcutArea>
          {bottomSections.map(s => (
            <SectionButton key={s}>{s}</SectionButton>
          ))}
        </Sidebar>

        <Panels>
          <Panel title="Obiekty" buttons={['plus', 'min', 'max', 'drop']} nodes={objects} hShare={89} />
          <Panel title="Drzewa" buttons={['plus', 'min', 'max', 'drop']} nodes={trees} vShare={12} hShare={36} />
          <Panel title="Filtry" buttons={['minus', 'plus', 'min', 'max']} nodes={filters} vShare={19} hShare={38} />
        </Panels>

        <Content>
          <GridToolbar>
            {gridTools.map((t, i) =>
              t ? (
                <ToolButton key={i} $look={t[2]} aria-label={t[0]}>
                  <Icon name={t[1]} />
                </ToolButton>
              ) : (
                <Divider key={i} />
              )
            )}
            <Spacer />
            <ToolButton aria-label="Eksport do Excela">
              <Icon name="excel" />
            </ToolButton>
            <PanelButton $small aria-label="Opcje eksportu">
              {headIcons.drop}
            </PanelButton>
            <Combo>
              <ComboSelect aria-label="Widok" defaultValue="VappsAp">
                <option>VappsAp</option>
              </ComboSelect>
              <ComboArrow>{headIcons.drop}</ComboArrow>
            </Combo>
            <ToolButton aria-label="Drukuj">
              <Icon name="printer" />
            </ToolButton>
          </GridToolbar>

          <FilterRow>
            <EdgeButton aria-label="Wyczyść filtry">X</EdgeButton>
            <FilterInput aria-label="Filtr: Nazwa licencji" />
            <span />
            <FilterInput aria-label="Filtr: Aplikacja" />
            <FilterInput aria-label="Filtr: Wersja" />
            <FilterInput aria-label="Filtr: Zainstalowane" />
            <FilterInput aria-label="Filtr: Licencje" />
            <FilterInput aria-label="Filtr: Nadwyżka" />
            <FilterInput aria-label="Filtr: Niedobór" />
            <EdgeButton aria-label="Zastosuj filtry">!</EdgeButton>
          </FilterRow>

          <GridFrame>
            <TableClip>
              <Table>
                <colgroup>
                  <col width="15" />
                  <col width="109" />
                  <col width="36" />
                  <col />
                  <col width="52" />
                  <col width="80" />
                  <col width="80" />
                  <col width="80" />
                  <col width="80" />
                </colgroup>
                <thead>
                  <tr>
                    <HeadCell />
                    <HeadCell>Nazwa licencji</HeadCell>
                    <HeadCell $end={1}>Zabro</HeadCell>
                    <HeadCell>Aplikacja</HeadCell>
                    <HeadCell>Wersja</HeadCell>
                    <HeadCell $end={1}>Zainstalowane</HeadCell>
                    {['Licencje', 'Nadwyżka', 'Niedobór'].map(h => (
                      <HeadCell key={h} $end={13}>
                        {h}
                        <SortMark>.</SortMark>
                      </HeadCell>
                    ))}
                  </tr>
                </thead>
                <tbody>
                  {rows.map((row, i) => (
                    <DataRow key={i} row={row} active={i === 0} />
                  ))}
                </tbody>
              </Table>
            </TableClip>
            <ScrollBar share={31} />
          </GridFrame>

          <Totals>
            <Total $col={6}>133</Total>
            <Total $col={7}>126</Total>
            <Total $col={8}>58</Total>
            <Total $col={9}>65</Total>
          </Totals>
        </Content>
      </Main>

      <StatusBar as="div" $cols="314px 9px 1fr">
        <StatusCell />
        <StatusCell />
        <StatusCell />
      </StatusBar>
      <StatusBar $text $cols="111px 142px 276px 201px 1fr">
        <StatusCell $date>2010-01-16  19:01</StatusCell>
        <StatusCell>Użytkownik: eaudytor</StatusCell>
        <StatusCell>{'Baza danych: \\\\(local)\\EAUDYTORINSTANCE\\eaudytor'}</StatusCell>
        <StatusCell>VappsAp</StatusCell>
        <StatusCell $end>Ilość: 89</StatusCell>
      </StatusBar>
    </Window>
  </>
)

export default App
